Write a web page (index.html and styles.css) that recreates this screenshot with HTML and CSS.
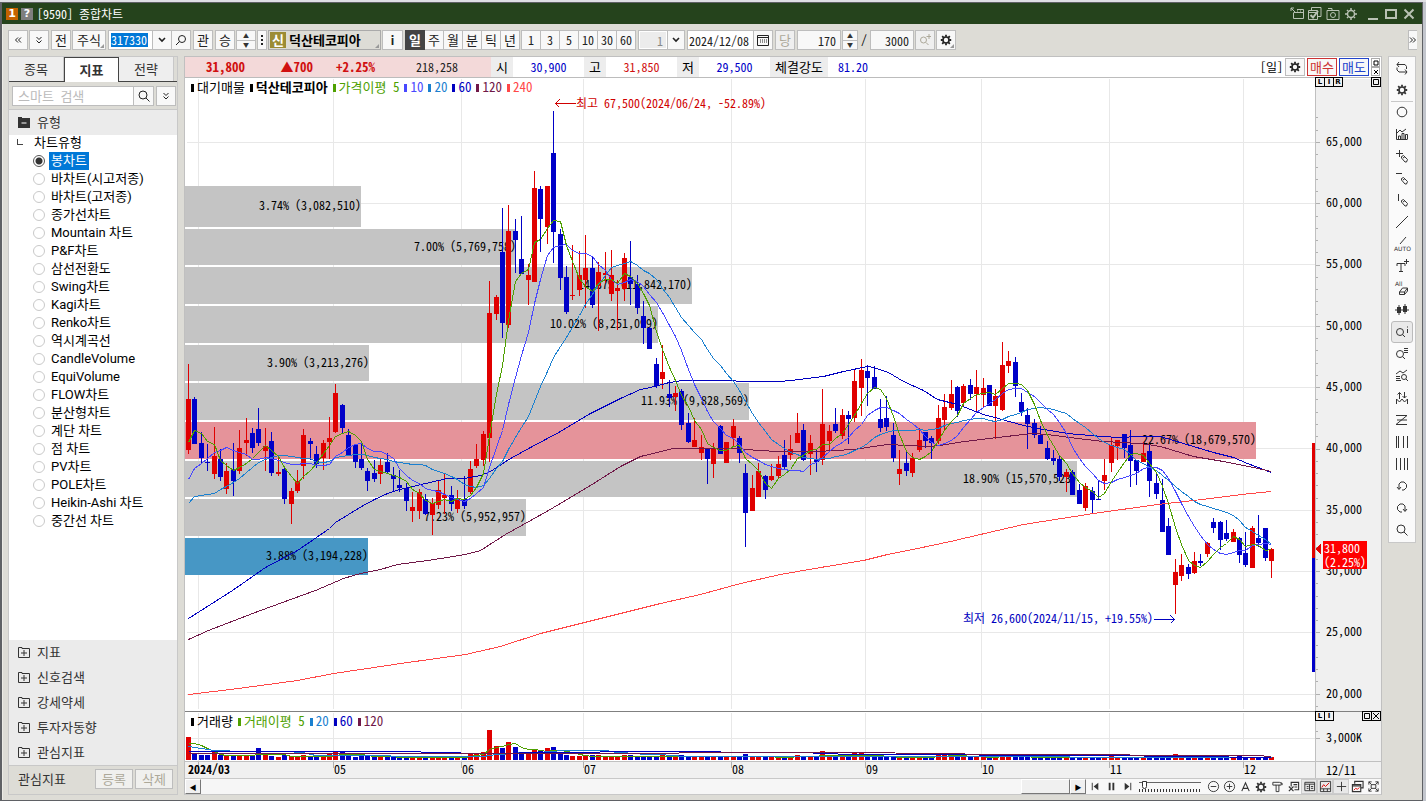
FILE: index.html
```html
<!DOCTYPE html>
<html lang="ko">
<head>
<meta charset="utf-8">
<title>[9590] 종합차트</title>
<link rel="stylesheet" href="styles.css">
</head>
<body>
<svg class="defs" aria-hidden="true">
  <symbol id="gear" viewBox="0 0 12 12"><circle cx="6" cy="6" r="3" fill="none" stroke="currentColor" stroke-width="1.600"/><path d="M6 .8v2M6 9.200v2M.8 6h2M9.200 6h2M2.200 2.200l1.400 1.400M8.400 8.400l1.400 1.400M9.800 2.200l-1.400 1.400M3.600 8.400l-1.400 1.400" stroke="currentColor" stroke-width="1.800"/></symbol>
  <symbol id="lens" viewBox="0 0 12 12"><circle cx="5" cy="5" r="4" fill="none" stroke="currentColor"/><path d="M8 8l3.500 3.500" stroke="currentColor"/></symbol>
  <symbol id="lens-left" viewBox="0 0 12 12"><circle cx="7" cy="5" r="3.500" fill="none" stroke="currentColor"/><path d="M4.500 7.500l-3.500 3.500" stroke="currentColor"/></symbol>
  <symbol id="down" viewBox="0 0 8 6"><path d="M1 1l3 3 3-3" fill="none" stroke="currentColor" stroke-width="1.600"/></symbol>
  <symbol id="dbl-down" viewBox="0 0 8 8"><path d="M1.500 1l2.500 2.500L6.500 1M1.500 4.500L4 7l2.500-2.500" fill="none" stroke="currentColor"/></symbol>
  <symbol id="dbl-left" viewBox="0 0 8 8"><path d="M4 1.500L1.500 4 4 6.500M7 1.500L4.500 4 7 6.500" fill="none" stroke="currentColor"/></symbol>
  <symbol id="dbl-right" viewBox="0 0 8 8"><path d="M1 1.500L3.500 4 1 6.500M4 1.500L6.500 4 4 6.500" fill="none" stroke="currentColor"/></symbol>
  <symbol id="plus-box" viewBox="0 0 12 12"><path d="M.5 1.500h3.500v1h7.500v9H.5zM3 7h6M6 4v6" fill="none" stroke="currentColor"/></symbol>
  <symbol id="minus-box" viewBox="0 0 12 12"><path d="M0 1h4v1h8v10H0z" fill="currentColor"/><path d="M3.500 7h5" stroke="#fff"/></symbol>
  <symbol id="pen" viewBox="0 0 14 14"><path d="M6.500 7.500l2-1 4 4-1 2.500h-1.500l-3.500-4zM8 9l2-1.500" fill="none" stroke="currentColor"/></symbol>
</svg>

<div class="window">
  <header class="titlebar">
    <span class="tag tag-no">1</span><span class="tag tag-help">?</span>
    <h1>[9590] 종합차트</h1>
    <div class="win-tools">
      <button aria-label="분리"><svg viewBox="0 0 14 14"><path d="M1 1l4 4M1 4V1h3M7 2.500h6.500v9h-10V6M3.500 5.500h10M7 4h1M10 4h1" fill="none" stroke="currentColor"/></svg></button>
      <button aria-label="저장"><svg viewBox="0 0 14 14"><path d="M.5 3.500h9v9h-9zM3.500 3V.5h9.500v9h-3M.5 5.500h9" fill="none" stroke="currentColor"/><path d="M2.500 8l2.500 2.500L10 4" fill="none" stroke="currentColor" stroke-width="2"/></svg></button>
      <button aria-label="캡처"><svg viewBox="0 0 14 14"><path d="M1 3.500h12v9H1zM2 1.500h4v2" fill="none" stroke="currentColor"/><circle cx="7" cy="8" r="2.500" fill="none" stroke="currentColor"/></svg></button>
      <button class="last" aria-label="설정"><svg viewBox="0 0 14 14"><circle cx="7" cy="7" r="3.500" fill="none" stroke="currentColor" stroke-width="1.500"/><path d="M7 1v2M7 11v2M1 7h2M11 7h2M3 3l1 1M10 10l1 1M11 3l-1 1M3 11l1-1" stroke="currentColor" stroke-width="1.500"/></svg></button>
      <button aria-label="최소화"><svg viewBox="0 0 14 14"><path d="M2 12h10" stroke="currentColor" stroke-width="2"/></svg></button>
      <button aria-label="최대화"><svg viewBox="0 0 14 14"><path d="M2 3h10v8H2z" fill="none" stroke="currentColor" stroke-width="2"/></svg></button>
      <button aria-label="닫기"><svg viewBox="0 0 14 14"><path d="M2.500 2.500l9 9M11.500 2.500l-9 9" stroke="currentColor" stroke-width="2"/></svg></button>
    </div>
  </header>

  <nav class="toolbar" aria-label="차트 도구">
    <button class="b" aria-label="접기"><svg class="i8"><use href="#dbl-left"/></svg></button>
    <button class="b push" aria-label="펼치기"><svg class="i8"><use href="#dbl-down"/></svg></button>
    <button class="b ko">전</button>
    <button class="b ko wide push corner">주식</button>
    <div class="joined push">
      <label class="code"><input value="317330" aria-label="종목코드"></label>
      <button class="b" aria-label="목록"><svg class="i8"><use href="#down"/></svg></button>
      <button class="b" aria-label="종목검색"><svg class="i12"><use href="#lens-left"/></svg></button>
    </div>
    <button class="b ko push">관</button>
    <button class="b ko">승</button>
    <div class="spin big"><button aria-label="이전 종목">▲</button><button aria-label="다음 종목">▼</button></div>
    <button class="b dots" aria-label="더보기"><svg viewBox="0 0 2 12"><path d="M0 1h2v2H0zM0 5h2v2H0zM0 9h2v2H0z" fill="currentColor"/></svg></button>
    <div class="stock ko corner"><span>신</span><strong>덕산테코피아</strong></div>
    <button class="b info push"><strong>i</strong></button>
    <div class="joined periods ko">
      <button class="b on">일</button><button class="b">주</button><button class="b">월</button><button class="b">분</button><button class="b">틱</button><button class="b">년</button>
    </div>
    <div class="joined periods push">
      <button class="b">1</button><button class="b">3</button><button class="b">5</button><button class="b">10</button><button class="b">30</button><button class="b">60</button>
    </div>
    <div class="joined push">
      <input class="num tick" value="1" aria-label="틱 간격" disabled>
      <button class="b" aria-label="간격 선택"><svg class="i8"><use href="#down"/></svg></button>
    </div>
    <div class="joined push">
      <input class="date" value="2024/12/08" aria-label="날짜">
      <button class="b" aria-label="달력"><svg class="i12" viewBox="0 0 12 12"><path d="M.5 1.500h11v10H.5zM.5 3.500h11" fill="none" stroke="currentColor"/><path d="M3 6h7M3 8h7" stroke="currentColor" stroke-dasharray="1 1"/></svg></button>
    </div>
    <button class="b ko push" disabled>당</button>
    <input class="num" value="170" aria-label="표시 개수">
    <div class="spin"><button aria-label="늘리기">▲</button><button aria-label="줄이기">▼</button></div>
    <span class="slash">/</span>
    <input class="num" value="3000" aria-label="전체 개수">
    <button class="b" aria-label="확대" disabled><svg class="i12" viewBox="0 0 12 12"><circle cx="4.500" cy="6" r="3" fill="none" stroke="currentColor"/><path d="M7 8.500l2.500 2.500M7.500 2.500h5M10 0v5" stroke="currentColor"/></svg></button>
    <button class="b corner" aria-label="설정"><svg class="i12"><use href="#gear"/></svg></button>
    <button class="b more" aria-label="도구 더보기"><svg class="i8"><use href="#dbl-right"/></svg></button>
  </nav>

  <main class="workspace">
    <aside class="side ko">
      <div class="tabs" role="tablist">
        <button role="tab">종목</button><button role="tab" class="active" aria-selected="true">지표</button><button role="tab">전략</button>
      </div>
      <div class="search">
        <input placeholder="스마트 검색" aria-label="스마트 검색"><button class="b" aria-label="검색"><svg class="i12"><use href="#lens"/></svg></button><button class="b" aria-label="펼치기"><svg class="i8"><use href="#dbl-down"/></svg></button>
      </div>
      <button class="fold head"><svg class="i12"><use href="#minus-box"/></svg>유형</button>
      <fieldset class="tree">
        <legend>차트유형</legend>
        <label><input type="radio" name="type" checked><span>봉차트</span></label>
        <label><input type="radio" name="type"><span>바차트(시고저종)</span></label>
        <label><input type="radio" name="type"><span>바차트(고저종)</span></label>
        <label><input type="radio" name="type"><span>종가선차트</span></label>
        <label><input type="radio" name="type"><span>Mountain 차트</span></label>
        <label><input type="radio" name="type"><span>P&amp;F차트</span></label>
        <label><input type="radio" name="type"><span>삼선전환도</span></label>
        <label><input type="radio" name="type"><span>Swing차트</span></label>
        <label><input type="radio" name="type"><span>Kagi차트</span></label>
        <label><input type="radio" name="type"><span>Renko차트</span></label>
        <label><input type="radio" name="type"><span>역시계곡선</span></label>
        <label><input type="radio" name="type"><span>CandleVolume</span></label>
        <label><input type="radio" name="type"><span>EquiVolume</span></label>
        <label><input type="radio" name="type"><span>FLOW차트</span></label>
        <label><input type="radio" name="type"><span>분산형차트</span></label>
        <label><input type="radio" name="type"><span>계단 차트</span></label>
        <label><input type="radio" name="type"><span>점 차트</span></label>
        <label><input type="radio" name="type"><span>PV차트</span></label>
        <label><input type="radio" name="type"><span>POLE차트</span></label>
        <label><input type="radio" name="type"><span>Heikin-Ashi 차트</span></label>
        <label><input type="radio" name="type"><span>중간선 차트</span></label>
      </fieldset>
      <button class="fold"><svg class="i12"><use href="#plus-box"/></svg>지표</button>
      <button class="fold"><svg class="i12"><use href="#plus-box"/></svg>신호검색</button>
      <button class="fold"><svg class="i12"><use href="#plus-box"/></svg>강세약세</button>
      <button class="fold"><svg class="i12"><use href="#plus-box"/></svg>투자자동향</button>
      <button class="fold"><svg class="i12"><use href="#plus-box"/></svg>관심지표</button>
      <div class="side-foot"><span>관심지표</span><button disabled>등록</button><button disabled>삭제</button></div>
    </aside>

    <section class="chart">
      <div class="quote">
        <div class="now"><b>31,800</b><b>▲700</b><b>+2.25%</b><span>218,258</span></div>
        <span class="k ko">시</span><span class="v down">30,900</span>
        <span class="k ko">고</span><span class="v up">31,850</span>
        <span class="k ko">저</span><span class="v down">29,500</span>
        <span class="k ko">체결강도</span><span class="v down short">81.20</span>
        <div class="trade">
          <span>[일]</span>
          <button class="b" aria-label="설정"><svg class="i12"><use href="#gear"/></svg></button>
          <button class="buy ko">매수</button><button class="sell ko">매도</button>
          <div class="mini"><button aria-label="최대화"><svg viewBox="0 0 8 8"><path d="M2 2h4v4H2z" fill="none" stroke="currentColor"/></svg></button><button aria-label="닫기"><svg viewBox="0 0 8 8"><path d="M2 2l4 4M6 2l-4 4" stroke="currentColor"/></svg></button></div>
        </div>
      </div>
      <div class="canvas">
        <svg id="plot" viewBox="185 78 1196 700" preserveAspectRatio="xMinYMin meet" role="img" aria-label="덕산테코피아 일봉 차트"></svg>
        <div class="legend ko price-legend"><span class="c-black">대기매물</span><span class="c-black"><b>덕산테코피아</b></span><span class="c-5">가격이평 5</span><span class="c-10">10</span><span class="c-20">20</span><span class="c-60">60</span><span class="c-120">120</span><span class="c-240">240</span></div>
        <div class="legend ko vol-legend"><span class="c-black">거래량</span><span class="c-5">거래이평 5</span><span class="c-20">20</span><span class="c-60">60</span><span class="c-120">120</span></div>
        <div class="pane-btns top"><button>L</button><button>I</button><button>R</button><button class="end" aria-label="최대화"><svg viewBox="0 0 8 8"><path d="M1.500 1.500h5v5h-5z" fill="none" stroke="currentColor"/></svg></button></div>
        <div class="pane-btns low"><button>L</button><button>I</button><button class="end" aria-label="최대화"><svg viewBox="0 0 8 8"><path d="M1.500 1.500h5v5h-5z" fill="none" stroke="currentColor"/></svg></button><button aria-label="닫기"><svg viewBox="0 0 8 8"><path d="M1 1l6 6M7 1L1 7" stroke="currentColor"/></svg></button></div>
      </div>
      <div class="bottom">
        <button class="arrow" aria-label="왼쪽">◀</button>
        <div class="track"><div class="thumb"></div></div>
        <button class="arrow" aria-label="오른쪽">▶</button>
        <div class="play">
          <button aria-label="처음"><svg viewBox="0 0 14 14"><path d="M3.500 3v8" stroke="currentColor" stroke-width="1"/><path d="M10 3v8L5 7z" fill="currentColor"/></svg></button>
          <button aria-label="정지"><svg viewBox="0 0 14 14"><path d="M5 3v8M9 3v8" stroke="currentColor" stroke-width="2"/></svg></button>
          <button aria-label="끝"><svg viewBox="0 0 14 14"><path d="M4 3v8l5-4z" fill="currentColor"/><path d="M10.500 3v8" stroke="currentColor"/></svg></button>
          <input type="range" min="0" max="20" value="1" aria-label="속도">
          <button aria-label="축소"><svg viewBox="0 0 14 14"><circle cx="7" cy="7" r="5.500" fill="none" stroke="currentColor"/><path d="M4 7h6" stroke="currentColor"/></svg></button>
          <button aria-label="확대"><svg viewBox="0 0 14 14"><circle cx="7" cy="7" r="5.500" fill="none" stroke="currentColor"/><path d="M4 7h6M7 4v6" stroke="currentColor"/></svg></button>
          <button aria-label="글자"><svg viewBox="0 0 14 14"><path d="M3 12l4-9 4 9M4.500 9h5" fill="none" stroke="currentColor" stroke-width="1.200"/></svg></button>
          <button aria-label="설정"><svg class="i12"><use href="#gear"/></svg></button>
          <button aria-label="도구"><svg viewBox="0 0 14 14"><path d="M2 2.500h7l3 1v2M2 2.500v3h3.500v7h3v-7H11V3M5 5.500h4" fill="none" stroke="currentColor"/></svg></button>
          <button aria-label="엑셀"><svg viewBox="0 0 14 14"><path d="M4.500 7V2.500h8v8H8M7 5h4M8 7.500h3M2 7l5 5M7 7l-5 5" fill="none" stroke="currentColor" stroke-width="1.200"/></svg></button>
          <button class="on" aria-label="표"><svg viewBox="0 0 14 14"><path d="M2 2.500h10.500v9H2z M2 4.500h10.500M7 4.500v7M4 7h2M4 9h2M8.500 7h2.500M8.500 9h2.500" fill="none" stroke="currentColor"/></svg></button>
          <button class="on" aria-label="차트"><svg viewBox="0 0 14 14"><path d="M1.500 1.500h11v11h-11zM1.500 9.500h11M5 9.500v3M9 9.500v3" fill="none" stroke="currentColor"/><path d="M3 8l2-3 2 2 4-4" fill="none" stroke="#d00"/></svg></button>
          <button class="on" aria-label="십자선"><svg viewBox="0 0 14 14"><path d="M7 2v10M2 7h10" stroke="currentColor"/></svg></button>
          <button aria-label="창"><svg viewBox="0 0 14 14"><path d="M4 4V1.500h9v7h-2.500M1.500 5h9v7.500h-9z M1.500 6.500h9" fill="none" stroke="currentColor" stroke-width="1.200"/><path d="M3 11l2-2 2 1 2-2" fill="none" stroke="#d00"/></svg></button>
          <button aria-label="전체화면"><svg viewBox="0 0 14 14"><path d="M2 5V2h3M9 2h3v3M12 9v3H9M5 12H2V9M4.500 5h5v4h-5zM2 2l3 3M12 2L9 5M12 12L9 9M2 12l3-3" fill="none" stroke="currentColor"/></svg></button>
        </div>
      </div>
    </section>

    <nav class="draw" aria-label="그리기 도구">
      <button aria-label="새로고침"><svg viewBox="0 0 14 14"><path d="M4 1L2 3.500 4 6M2 3.500h8l1.500 2V8M10 8.500l2 2.500-2 2.500M12 11H4L2 9V6.500" fill="none" stroke="currentColor"/></svg></button>
      <button class="sep" aria-label="설정"><svg class="i12"><use href="#gear"/></svg></button>
      <button aria-label="원"><svg viewBox="0 0 14 14"><circle cx="7" cy="7" r="4.800" fill="none" stroke="currentColor"/></svg></button>
      <button aria-label="지표 차트"><svg viewBox="0 0 14 14"><path d="M1.500 2v10.500h11M3.500 12V9h2v3M7 12V6.500h2V12M10.500 12V7.500h2V12M2 6l3-3 2 2 4-3" fill="none" stroke="currentColor"/></svg></button>
      <button aria-label="십자선 그리기"><svg viewBox="0 0 14 14"><path d="M1 4.500h7M4.500 1v7" stroke="currentColor"/><use href="#pen"/></svg></button>
      <button aria-label="수평선"><svg viewBox="0 0 14 14"><path d="M1 2.500h6" stroke="currentColor"/><use href="#pen"/></svg></button>
      <button aria-label="수직선"><svg viewBox="0 0 14 14"><path d="M3.500 1v7" stroke="currentColor"/><use href="#pen"/></svg></button>
      <button aria-label="추세선"><svg viewBox="0 0 14 14"><path d="M1 13L13 1" stroke="currentColor"/></svg></button>
      <button aria-label="자동 추세선" class="txt"><svg viewBox="0 0 16 14"><path d="M6 7l6-7" stroke="currentColor"/><text x="0" y="14">AUTO</text></svg></button>
      <button aria-label="글자"><svg viewBox="0 0 14 14"><path d="M2 7V4.500h8V7M6 4.500v8M4 12.500h4M9 2.500h5M11.500 0v5" fill="none" stroke="currentColor"/></svg></button>
      <button aria-label="전체 삭제" class="txt"><svg viewBox="0 0 16 14"><text x="1" y="5">All</text><path d="M5.500 11l3-4h5v3l-3 3.500h-5zM5.500 11h5v2.500M10.500 11l3-4" fill="none" stroke="currentColor"/></svg></button>
      <button aria-label="봉"><svg viewBox="0 0 14 14"><path d="M4 2v10M10 1v10M0 7h14" stroke="currentColor"/><path d="M2 4h4v6H2zM8 3h4v6H8z" fill="currentColor"/></svg></button>
      <button class="on" aria-label="정보 확대"><svg viewBox="0 0 14 14"><circle cx="5" cy="7" r="3.500" fill="none" stroke="currentColor"/><path d="M7.500 9.500L10 12M12.500 4v4M12.500 1.500v1" stroke="currentColor"/></svg></button>
      <button aria-label="목록 확대"><svg viewBox="0 0 14 14"><circle cx="5" cy="7" r="3.500" fill="none" stroke="currentColor"/><path d="M7.500 9.500L10 12M9 1.500h4M9 3.500h4M9 5.500h4" stroke="currentColor"/></svg></button>
      <button aria-label="추세 검색"><svg viewBox="0 0 14 14"><circle cx="9" cy="8" r="2.500" fill="none" stroke="currentColor"/><path d="M11 10l2 2M1 5l4-3 3 2 4-3M1 7.500h4M1 9.500h4M1 11.500h5" fill="none" stroke="currentColor"/></svg></button>
      <button aria-label="변곡점"><svg viewBox="0 0 14 14"><path d="M1.500 13V8l3 3 2.500-3 2.500 3 3-3v5M4.500 8V1.500M2.500 3.500l2-2 2 2M9.500 1v6M7.500 5l2 2 2-2" fill="none" stroke="currentColor"/></svg></button>
      <button aria-label="지그재그"><svg viewBox="0 0 14 14"><path d="M1 2.500h11L1 11.500h11M2 7h10" fill="none" stroke="currentColor"/></svg></button>
      <button aria-label="시간대"><svg viewBox="0 0 14 14"><path d="M1.500 1v12M3.500 1v12M8.500 1v12M12.500 1v12" stroke="currentColor"/></svg></button>
      <button aria-label="등간격"><svg viewBox="0 0 14 14"><path d="M1.500 1v12M5.500 1v12M9.500 1v12M12.500 1v12" stroke="currentColor"/></svg></button>
      <button aria-label="되돌리기"><svg viewBox="0 0 14 14"><path d="M4 10V5l2-2h3l2.500 2.500v3L9 11H7M2 8l2 2.500L6 8" fill="none" stroke="currentColor"/></svg></button>
      <button aria-label="다시하기"><svg viewBox="0 0 14 14"><path d="M10 10V5L8 3H5L2.500 5.500v3L5 11h2M8 8l2 2.500L12 8" fill="none" stroke="currentColor"/></svg></button>
      <button aria-label="찾기"><svg class="i12"><use href="#lens"/></svg></button>
    </nav>
  </main>
</div>
<script src="chart.js"></script>
</body>
</html>
```

FILE: styles.css
```css
* { box-sizing: border-box; }
body {
  margin: 0;
  height: 100vh;
  overflow: hidden;
  background: #c3c6cd;
  border-top: 2px solid #dfe0e4;
  font: 12px/16px "Noto Sans Mono CJK KR", "Noto Sans CJK KR", sans-serif;
  color: #000;
}
button, input { font: inherit; color: inherit; margin: 0; padding: 0; border-radius: 0; }
button { background: none; border: 0; display: flex; align-items: center; justify-content: center; }
svg { display: block; flex: none; }
.defs { position: absolute; width: 0; height: 0; }
.i8 { width: 8px; height: 8px; }
.i12 { width: 12px; height: 12px; }
.ko { font-size: 13px; }

.window {
  height: 100%;
  margin: 0 3px 0 0;
  background: #dddcd6;
  border: 1px solid #5f6165;
  border-left-width: 2px;
  box-shadow: inset 1px 0 #ecebe6;
  display: flex;
  flex-direction: column;
}
.titlebar {
  height: 21px;
  flex: none;
  background: #25431c;
  color: #fff;
  display: flex;
  align-items: center;
  padding: 0 6px 0 4px;
}
.titlebar h1 { font-size: 12px; font-weight: 400; margin: 0 0 0 4px; }
.tag { width: 12px; height: 12px; margin-right: 3px; font: bold 11px/12px "DejaVu Sans", sans-serif; text-align: center; }
.tag-no { background: #c46200; }
.tag-help { background: #7f7f7f; margin-right: 0; }
.win-tools { margin-left: auto; display: flex; gap: 4px; color: #b9c2b4; }
.win-tools .last { margin-right: 4px; }
.win-tools svg { width: 14px; height: 14px; }

.toolbar { flex: none; height: 32px; padding: 6px 5px 6px 6px; display: flex; gap: 1px; align-items: center; }
.push { margin-right: 1px; }
.b, .num, .date, .code {
  height: 20px;
  min-width: 20px;
  background: #f8f8f8;
  border: 1px solid #bdbdbd;
  color: #222;
}
.toolbar .b.ko, .periods .b { padding-bottom: 1px; }
.b:disabled { color: #aca899; background: #efefef; }
.joined { display: flex; }
.joined .b + .b, .joined input + .b, .joined .code + .b { border-left: 0; min-width: 19px; }
.joined .tick + .b { min-width: 17px; }
.wide { width: 34px; }
.corner { position: relative; }
.corner::after {
  content: "";
  position: absolute;
  right: 1px;
  bottom: 1px;
  border: 2px solid #999;
  border-top-color: transparent;
  border-left-color: transparent;
}
.code { width: 45px; padding: 2px; background: #fff; display: flex; }
.code input { width: 37px; height: 14px; border: 0; background: #0078d7; color: #fff; }
.b.dots { min-width: 10px; width: 10px; }
.dots svg { width: 2px; height: 12px; }
.info { width: 21px; }
.spin { width: 16px; height: 20px; display: grid; border: 1px solid #bdbdbd; }
.spin.big { width: 20px; }
.spin button { height: 9px; background: #f8f8f8; font-size: 6px; line-height: 8px; color: #333; }
.spin button + button { border-top: 1px solid #bdbdbd; }
.stock {
  height: 20px;
  width: 113px;
  border: 1px solid #aaa;
  display: flex;
  align-items: center;
  gap: 3px;
  padding-left: 1px;
}
.stock span { background: #9c8c35; color: #fff; font-weight: 700; width: 16px; height: 16px; line-height: 15px; text-align: center; }
.periods .on { background: #444; color: #fff; border-color: #444; font-weight: 700; }
.num { width: 44px; text-align: right; padding-right: 4px; }
.tick { width: 30px; background: #ececec; color: #888; outline: 1px solid #fff; outline-offset: -2px; }
.date { width: 67px; padding-left: 1px; background: #fff; }
.slash { width: 10px; text-align: center; }
.b.more { min-width: 9px; width: 9px; margin-left: auto; border-right: 0; overflow: hidden; }

.workspace { flex: 1; min-height: 0; display: flex; gap: 6px; padding: 0 6px 5px 6px; }

.side { width: 170px; flex: none; background: #fff; border: 1px solid #c8c8c8; display: flex; flex-direction: column; }
.tabs { display: flex; height: 25px; background: #dddcd6; border-bottom: 1px solid #444; flex: none; }
.tabs button { width: 55px; height: 24px; background: #eee; color: #333; border-right: 1px solid #c8c8c8; }
.tabs .active { height: 25px; background: #fff; border: 1px solid #444; border-bottom: 0; font-weight: 700; }
.search { display: flex; padding: 4px 3px; background: #dddcd6; border-bottom: 1px solid #c8c8c8; flex: none; height: 28px; }
.search input { width: 122px; height: 20px; border: 1px solid #bdbdbd; padding: 0 0 2px 5px; background: #fff; }
.search input::placeholder { color: #bbb; opacity: 1; }
.search .b { border-left: 0; }
.search .b + .b { margin-left: 2px; border-left: 1px solid #bdbdbd; }
.fold { height: 25px; flex: none; background: #ebebeb; color: #333; justify-content: flex-start; gap: 7px; padding: 0 0 2px 9px; }
.tree {
  flex: 1;
  min-height: 0;
  margin: 0;
  padding: 0 0 0 24px;
  border: 0;
  font: 13px/18px Roboto, "Noto Sans CJK KR", sans-serif;
  overflow: hidden;
  display: flex;
  flex-direction: column;
}
.tree legend { padding: 0; height: 17px; line-height: 16px; }
.tree legend::before { content: ""; display: inline-block; width: 5px; height: 5px; margin: 0 11px 4px -16px; border: solid #444; border-width: 0 0 1px 1px; vertical-align: middle; }
.tree label { display: flex; align-items: center; height: 18px; flex: none; gap: 4px; }
.tree input { appearance: none; width: 12px; height: 12px; border: 1px solid #c9c9c9; border-radius: 50%; background: #fff; }
.tree input:checked { border-color: #555; background: radial-gradient(#333 3px, #fff 4px); }
.tree span { padding: 0 2px; }
.tree input:checked + span { background: #0078d7; color: #fff; }
.side-foot { flex: none; height: 29px; border-top: 1px solid #c8c8c8; background: #dddcd6; display: flex; align-items: center; gap: 2px; padding: 0 4px 2px 9px; color: #333; }
.side-foot span { margin-right: auto; }
.side-foot button { width: 38px; height: 20px; border: 1px solid #bdbdbd; background: #f0f0ee; color: #aca899; }

.chart { flex: 1; min-width: 0; border: 1px solid #c0c0c0; border-bottom-color: #c8c8c8; display: flex; flex-direction: column; background: #fff; }
.quote { height: 21px; flex: none; display: flex; align-items: stretch; line-height: 20px; border-bottom: 1px solid #bcbcbc; }
.now { background: #f3d9d9; width: 306px; display: grid; grid-template-columns: 60px 68px 62px 83px; text-align: right; color: #d01010; }
.now b { font-size: 13px; }
.now span { color: #222; }
.k { background: #ededed; width: 22px; text-align: center; }
.k:nth-last-child(3) { width: 58px; }
.v { width: 71px; text-align: center; }
.v.short { width: 50px; }
.down { color: #0000c8; }
.up { color: #d01010; }
.trade { margin-left: auto; display: flex; align-items: center; gap: 2px; padding-right: 1px; }
.trade .b { height: 18px; }
.buy, .sell { width: 30px; height: 18px; border: 1px solid #cc3333; color: #cc3333; background: #f8f8f8; }
.sell { border-color: #2244cc; color: #2244cc; }
.mini { display: grid; }
.mini button { width: 9px; height: 9px; border: 1px solid #aaa; }
.mini svg { width: 8px; height: 8px; }

.canvas { flex: 1; min-height: 0; position: relative; }
#plot { width: 100%; height: 100%; }
#plot text { font: 12px "Noto Sans Mono CJK KR", "Noto Sans CJK KR", sans-serif; white-space: pre; }
#plot .bold { font-weight: 700; }
.legend { position: absolute; left: 6px; display: flex; gap: 5px; white-space: pre; }
.price-legend { top: 1px; }
.vol-legend { top: 635px; }
.legend span::before { content: ""; display: inline-block; width: 3px; height: 8px; margin-right: 3px; background: currentColor; }
.c-black { color: #000; }
.c-5 { color: #4ea000; }
.c-10 { color: #4848ff; }
.c-20 { color: #1a80d0; }
.c-60 { color: #0000c0; }
.c-120 { color: #701848; }
.c-240 { color: #ff4848; }
.pane-btns { position: absolute; right: 0; width: 66px; display: flex; }
.pane-btns.top { top: -1px; }
.pane-btns.low { top: 633px; }
.pane-btns button { width: 10px; height: 10px; margin-right: -1px; border: 1px solid #000; font: bold 7px/8px "DejaVu Sans", sans-serif; background: #f0f0f0; }
.pane-btns svg { width: 8px; height: 8px; }
.pane-btns .end { margin-left: auto; }
.pane-btns button:last-child { margin-right: 0; }

.bottom { height: 16px; flex: none; display: flex; border-top: 1px solid #c8c8c8; background: #f8f8f8; }
.arrow { width: 16px; font-size: 7px; border: 1px solid #fff; border-right-color: #777; border-bottom-color: #777; background: #f0f0f0; }
.track { flex: 1; background: #f6f6f6; }
.thumb { width: 49px; height: 15px; margin-left: auto; background: #f0f0f0; border: 1px solid #fff; border-right-color: #777; border-bottom-color: #777; }
.play { width: 295px; display: flex; align-items: center; color: #333; padding-left: 1px; }
.play button { width: 16px; height: 15px; }
.play button.on { background: #e8e8e8; border: 1px solid #ccc; }
.play svg { width: 13px; height: 13px; }
.play .i12 { width: 12px; height: 12px; }
.play input {
  appearance: none;
  width: 62px;
  height: 13px;
  margin: 0 4px 0 4px;
  background: repeating-linear-gradient(90deg, #333 0 1px, transparent 1px 3px) 0 9px / 100% 3px no-repeat, linear-gradient(#666, #666) 0 2px / 100% 1px no-repeat;
}
.play input::-webkit-slider-thumb { appearance: none; width: 5px; height: 8px; margin-top: -4px; background: #fff; border: 1px solid #333; border-radius: 0 0 3px 3px; }

.draw { width: 28px; flex: none; align-self: flex-start; background: #fafafa; border: 1px solid #c8c8c8; padding: 0 2px 1px; display: flex; flex-direction: column; color: #333; }
.draw button { height: 22px; border-radius: 3px; }
.draw svg { width: 14px; height: 14px; overflow: visible; }
.draw .i12 { width: 12px; height: 12px; }
.draw .txt svg { width: 16px; }
.draw text { font: 6px "DejaVu Sans", sans-serif; fill: currentColor; }
.draw .sep { box-shadow: 0 1px #c8c8c8; border-radius: 0; }
.draw .on { background: #eaeaea; border: 1px solid #bbb; }
```

FILE: chart.js
```js
const plot = document.getElementById("plot");
const STEP = 6.408;
const X0 = 188;
const cx = i => Math.round(X0 + STEP * i);

// rising flag, body top, body bottom, high, low
const candles = [
[1,399,450,364,454],[0,399,444,397,444],[0,443,458,432,464],[0,462,463,444,471],[1,456,474,427,479],[0,459,477,449,481],
[1,471,489,463,494],[0,470,481,443,496],[1,448,471,430,474],[1,440,443,418,456],[0,433,448,428,453],[0,429,443,408,446],
[1,446,451,428,471],[0,441,473,432,476],[1,472,474,456,476],[0,469,499,467,504],[1,491,504,488,524],[1,481,491,470,493],
[1,435,466,429,479],[0,441,444,438,460],[0,454,464,446,468],[1,443,458,440,470],[1,438,442,417,459],[1,393,432,384,433],
[0,405,428,404,433],[0,435,455,429,455],[0,445,462,445,468],[0,459,468,442,470],[0,471,481,468,491],[0,473,479,460,482],
[1,465,474,459,484],[0,462,472,453,473],[0,475,479,467,492],[0,485,488,470,492],[0,488,501,483,511],[1,507,511,492,522],
[1,492,511,489,519],[0,499,514,494,515],[1,503,515,498,535],[1,490,505,481,509],[1,495,498,474,514],[0,495,504,486,511],
[1,499,509,490,513],[0,499,506,476,509],[1,469,492,461,494],[1,459,466,444,468],[1,434,460,431,466],[1,313,438,281,462],
[1,297,314,295,320],[0,252,323,208,338],[1,231,325,205,328],[0,231,240,219,273],[0,259,274,216,274],[1,275,280,264,305],
[1,188,282,171,282],[0,189,219,186,252],[1,186,227,186,244],[0,153,232,111,263],[0,234,278,229,290],[0,277,312,266,314],
[1,295,296,245,300],[1,275,290,251,296],[1,268,280,235,308],[0,268,305,257,308],[1,272,286,262,331],[1,273,275,252,283],
[1,275,294,250,301],[1,288,291,280,330],[1,258,289,253,301],[0,277,284,241,305],[0,284,308,275,314],[0,316,328,301,344],
[0,328,349,327,349],[0,364,386,358,388],[1,372,379,345,389],[0,394,398,380,407],[1,393,397,386,411],[0,391,425,389,430],
[0,423,442,413,443],[1,440,447,418,447],[1,447,453,435,460],[0,449,459,448,484],[1,448,464,443,478],[0,426,454,425,454],
[1,442,463,442,463],[1,426,438,419,446],[0,438,453,436,463],[0,473,513,464,547],[1,488,511,475,511],[1,471,497,463,497],
[0,476,490,475,499],[1,476,480,464,481],[1,464,476,456,479],[0,455,467,440,470],[1,449,455,435,460],[1,433,443,413,443],
[0,430,460,424,461],[1,443,454,435,475],[0,459,462,449,472],[1,424,460,389,465],[1,431,441,425,451],[0,424,431,408,433],
[1,415,436,409,439],[0,415,419,411,444],[1,381,418,370,422],[1,370,388,359,416],[0,371,378,365,406],[0,377,389,366,389],
[0,419,428,399,432],[0,418,427,396,431],[0,435,458,423,462],[1,469,474,450,485],[0,463,471,450,476],[1,458,473,453,477],
[1,440,450,428,452],[0,432,441,432,448],[0,438,443,436,459],[1,418,441,405,444],[1,407,420,394,431],[1,394,408,380,410],
[0,387,411,386,417],[1,386,403,384,407],[0,385,394,379,400],[1,387,394,370,411],[1,388,395,378,407],[0,385,406,385,406],
[1,396,406,389,439],[1,365,410,342,411],[1,361,366,351,373],[0,362,386,357,397],[0,402,412,393,416],[0,415,424,408,449],
[0,423,435,419,438],[0,435,444,426,444],[0,448,459,441,460],[0,458,461,450,465],[0,459,477,456,481],[1,472,477,469,492],
[0,472,495,470,495],[0,490,504,484,504],[1,486,508,483,511],[0,491,500,487,513],[0,499,500,480,500],[1,475,481,459,490],
[1,445,463,438,472],[1,440,446,440,460],[0,434,448,434,458],[0,445,461,430,487],[0,460,471,460,485],[1,453,462,442,462],
[0,451,481,444,497],[0,483,494,472,499],[0,500,532,479,532],[0,526,555,518,555],[1,572,585,559,614],[1,565,576,554,581],
[0,567,574,564,579],[1,561,573,552,574],[0,561,563,554,566],[1,543,554,542,557],[0,522,528,518,533],[0,522,540,521,550],
[0,533,539,520,541],[1,532,542,529,542],[0,538,555,537,563],[0,553,565,532,567],[1,528,568,526,568],[0,538,543,515,547],
[0,528,558,528,561],[1,549,561,548,578]
];

const volumes = [23,6,5,5,8,5,4,5,5,5,4,12,5,4,3,5,4,3,5,4,3,4,6,9,8,5,3,5,5,4,3,3,4,3,4,3,3,4,3,3,4,3,3,4,6,7,8,30,
14,12,18,13,8,6,11,10,12,13,6,5,4,4,4,5,5,4,4,4,5,5,4,4,4,4,6,4,3,5,4,3,4,4,3,4,4,4,4,6,4,4,3,3,3,3,4,5,4,4,3,9,4,4,5,3,8,7,4,4,4,3,
3,3,3,3,4,4,3,5,6,5,4,4,3,4,3,3,3,5,4,3,3,3,3,3,3,3,3,3,3,3,3,3,3,3,4,3,3,3,3,3,3,3,4,3,6,4,3,3,3,3,3,3,3,3,4,3,3,3,3,3];

// volume at price: top, height, right edge, fill, label
const profile = [
  [186,41,361,"#c4c4c4","3.74% (3,082,510)"],
  [229,36,516,"#c4c4c4","7.00% (5,769,758)"],
  [267,37,692,"#c4c4c4","14.37% (11,842,170)"],
  [306,37,658,"#c4c4c4","10.02% (8,251,099)"],
  [345,36,369,"#c4c4c4","3.90% (3,213,276)"],
  [383,37,749,"#c4c4c4","11.93% (9,828,569)"],
  [422,37,1256,"#e5939a","22.67% (18,679,570)"],
  [461,36,1077,"#c4c4c4","18.90% (15,570,523)"],
  [499,37,526,"#c4c4c4","7.23% (5,952,957)"],
  [538,37,368,"#4797c5","3.88% (3,194,228)"]
];

const months = [[198,"2024/03"],[333,"05"],[461,"06"],[583,"07"],[731,"08"],[865,"09"],[981,"10"],[1109,"11"],[1243,"12"]];

const longLines = {
  "#0000c0": "188,618 232,590 265,567 297,550 316,537 329,528 335,522 348,514 361,506 374,499 387,493 399,489 412,486 425,483 438,480 447,478 464,478 480,475 490,471 510,458 530,447 560,431 590,413 620,398 640,389 650,387 669,382 682,380 718,380 753,381 780,381 790,380 823,376 843,371 867,366 873,367 888,372 903,381 923,390 937,399 957,404 983,414 998,418 1023,425 1043,429 1067,433 1090,435 1117,437 1140,436 1160,436 1173,440 1193,446 1213,452 1233,457 1247,463 1271,472",
  "#701848": "188,639 208,630 260,610 315,590 343,578 360,573 380,569 397,564 427,560 447,557 465,554 480,550 505,534 548,510 590,485 620,466 640,456 673,448 713,448 737,448 757,450 780,451 817,451 853,449 887,444 927,446 940,445 957,442 980,439 1023,434 1032,433 1047,434 1077,438 1103,441 1140,443 1160,446 1193,456 1223,461 1253,467 1271,471",
  "#ff4848": "188,694 230,689 260,685 297,680 333,673 367,668 400,663 465,654 500,646 540,633 580,623 620,613 660,603 700,594 740,583 780,574 820,567 863,560 887,554 917,548 950,541 997,530 1023,524 1093,513 1157,504 1193,500 1250,493 1271,491"
};

function average(values, n, lead) {
  return values.map((_, i) => {
    if (i < lead.length) return lead[i];
    const part = values.slice(Math.max(0, i - n + 1), i + 1);
    return part.reduce((a, b) => a + b, 0) / part.length;
  });
}
const points = ys => ys.map((y, i) => `${cx(i)},${Math.round(y)}`).join(" ");
const rect = (x, y, w, h, fill) => `<rect x="${x}" y="${y}" width="${w}" height="${h}" fill="${fill}"/>`;
const text = (x, y, s, extra = "") => `<text x="${x}" y="${y}" ${extra}>${s}</text>`;
const line = (pts, color) => `<polyline points="${pts}" transform="translate(.5 .5)" fill="none" stroke="${color}"/>`;

let out = `<g shape-rendering="crispEdges">`;

// grid
const levels = [142,203,264,326,387,448,510,571,632,694];
levels.forEach(y => out += rect(187, y, 1128, 1, "#e8e8e8"));
out += rect(187, 738, 1128, 1, "#e8e8e8");
months.forEach(([x]) => out += rect(x, 79, 1, 630, "#e8e8e8") + rect(x, 713, 1, 48, "#e8e8e8"));

profile.forEach(([y, h, r, fill]) => out += rect(185, y, r - 185, h, fill));
profile.forEach(([y, h, r, , s]) => out += text(r, y + Math.floor(h / 2) + 4, s, `text-anchor="end"`));

// candles
candles.forEach(([up, top, bottom, high, low], i) => {
  const color = up ? "#e00000" : "#0000c8";
  const x = cx(i);
  out += rect(x, high, 1, low - high, color) + rect(x - 2, top, 5, bottom - top, color);
});

// moving averages
const closes = candles.map(([up, top, bottom]) => up ? top : bottom);
for (const color in longLines) out += line(longLines[color], color);
out += line(points(average(closes, 20, [503,496,495,494,493,489,486,482,478,472,467,462,459,457,455,455,456,457,458])), "#1a80d0");
out += line(points(average(closes, 10, [479,468,463,458,452,450,447,450,452])), "#4848ff");
out += line(points(average(closes, 5, [442,430,433,441])), "#4ea000");

// high and low marks
out += `<path d="M555.500 103.500h20M559.500 99.500l-4 4 4 4" fill="none" stroke="#d00000"/>`;
out += text(576, 108, "최고 67,500(2024/06/24, -52.89%)", `fill="#d00000"`);
out += `<path d="M1154 619.500h20M1170.500 615.500l4 4-4 4" fill="none" stroke="#0000c0"/>`;
out += text(1153, 623, "최저 26,600(2024/11/15, +19.55%)", `text-anchor="end" fill="#0000c0"`);

// volume
out += rect(185, 711, 1196, 1, "#808080");
volumes.forEach((v, i) => out += rect(cx(i) - 2, 760 - v, 5, v, candles[i][0] ? "#e00000" : "#0000c8"));
const volY = volumes.map(v => 760 - v);
out += line(points(average(volY, 5, [743,743,745,748])), "#4ea000");
out += line(points(average(volY, 20, [746,747,748,749,750,750,750,751,751,751,751,751,751,751,751,751,751,752,752])), "#1a80d0");
out += line("188,751 400,751 480,753 640,751 800,752 850,754 1100,755 1271,757", "#0000c0");
out += line("188,753 460,753 500,753 860,752 1000,754 1256,755 1271,756", "#701848");

// axes
out += rect(1315, 79, 66, 632, "#f0f0f0") + rect(1315, 712, 66, 66, "#f0f0f0") + rect(185, 761, 1130, 17, "#f0f0f0");
out += rect(185, 761, 1196, 1, "#c0c0c0") + rect(1315, 79, 1, 699, "#c0c0c0");
for (let n = -2; n < 47; n++) out += rect(1316, Math.round(142 + n * 12.26), n % 5 ? 2 : 4, 1, "#b0b0b0");
out += rect(1316, 738, 4, 1, "#b0b0b0") + rect(1316, 731, 2, 1, "#b0b0b0");
levels.forEach((y, i) => out += text(1326, y + 4, `${65 - i * 5},000`));
out += text(1326, 742, "3,000K") + text(1326, 775, "12/11");
months.forEach(([x, s], i) => {
  out += rect(x, 762, 1, 6, "#b0b0b0");
  out += text(i ? x + 1 : 188, 774, s, i ? "" : `class="bold"`);
});

// current price
out += rect(1312, 443, 3, 115, "#e00000") + rect(1312, 558, 3, 114, "#0000c8");
out += `<path d="M1315 549l6-6v12z" fill="#e00000"/>` + rect(1323, 541, 44, 28, "#ff0000");
out += text(1324, 553, "31,800", `fill="#fff"`) + text(1324, 567, "(2.25%)", `fill="#fff"`);

plot.innerHTML = out + "</g>";
```
